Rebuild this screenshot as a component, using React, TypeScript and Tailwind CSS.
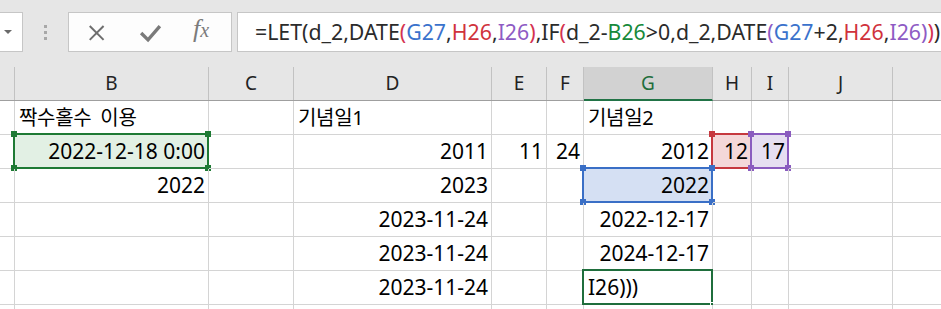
import React from "react";

const COLS = [
  { k: "A", w: 15, label: "" },
  { k: "B", w: 194, label: "B" },
  { k: "C", w: 85, label: "C" },
  { k: "D", w: 198, label: "D" },
  { k: "E", w: 55, label: "E" },
  { k: "F", w: 37, label: "F" },
  { k: "G", w: 129, label: "G" },
  { k: "H", w: 39, label: "H" },
  { k: "I", w: 37, label: "I" },
  { k: "J", w: 104, label: "J" },
  { k: "K", w: 60, label: "" },
];

type Sel = { color: string; fill: string; handles: boolean; fillHandle?: boolean };

type Cell = { t?: string; align?: "l" | "r"; ko?: boolean; sel?: Sel };

const green: Sel = { color: "#1e7a34", fill: "#e2f0e4", handles: true };
const blue: Sel = { color: "#3a6fc6", fill: "#d5e0f3", handles: true };
const red: Sel = { color: "#c6393f", fill: "#f4d8d9", handles: true };
const purple: Sel = { color: "#8a5cbf", fill: "#e6dff1", handles: true };
const active: Sel = { color: "#1f6e3c", fill: "transparent", handles: false, fillHandle: true };

const ROWS: Record<string, Cell>[] = [
  {
    B: { t: "짝수홀수 이용", align: "l", ko: true },
    D: { t: "기념일1", align: "l", ko: true },
    G: { t: "기념일2", align: "l", ko: true },
  },
  {
    B: { t: "2022-12-18 0:00", sel: green },
    D: { t: "2011" },
    E: { t: "11" },
    F: { t: "24" },
    G: { t: "2012" },
    H: { t: "12", sel: red },
    I: { t: "17", sel: purple },
  },
  { B: { t: "2022" }, D: { t: "2023" }, G: { t: "2022", sel: blue } },
  { D: { t: "2023-11-24" }, G: { t: "2022-12-17" } },
  { D: { t: "2023-11-24" }, G: { t: "2024-12-17" } },
  { D: { t: "2023-11-24" }, G: { t: "I26)))", align: "l", sel: active } },
  {},
];

const font = { fontFamily: '"Noto Sans", "Noto Sans CJK KR", sans-serif' };

function Handle({ c, pos }: { c: string; pos: string }) {
  return <div className={`absolute w-[6px] h-[6px] ${pos}`} style={{ background: c }} />;
}

function Overlay({ s }: { s: Sel }) {
  return (
    <div
      className="absolute -left-[2px] -top-[2px] -right-[1px] -bottom-[1px] border-2 pointer-events-none"
      style={{ borderColor: s.color }}
    >
      {s.handles && (
        <>
          <Handle c={s.color} pos="-left-[4px] -top-[4px]" />
          <Handle c={s.color} pos="-right-[4px] -top-[4px]" />
          <Handle c={s.color} pos="-left-[4px] -bottom-[4px]" />
          <Handle c={s.color} pos="-right-[4px] -bottom-[4px]" />
        </>
      )}
      {s.fillHandle && (
        <div className="absolute -right-[3px] -bottom-[3px] w-[4px] h-[4px] bg-[#1f6e3c] border border-white" />
      )}
    </div>
  );
}

const seg = (t: string, c: string) => ({ t, c });
const K = "#2b2b2b";
const BL = "#3a72cc";
const RD = "#d0323c";
const PU = "#8e5bc4";
const GR = "#17893a";
const MG = "#d4324f";
const FORMULA = [
  seg("=LET(d_2,DATE", K),
  seg("(", MG),
  seg("G27", BL),
  seg(",", K),
  seg("H26", RD),
  seg(",", K),
  seg("I26", PU),
  seg(")", MG),
  seg(",IF", K),
  seg("(", MG),
  seg("d_2-", K),
  seg("B26", GR),
  seg(">0,d_2,DATE", K),
  seg("(", PU),
  seg("G27", BL),
  seg("+2,", K),
  seg("H26", RD),
  seg(",", K),
  seg("I26", PU),
  seg(")", PU),
  seg(")", MG),
  seg(")", K),
];

export default function App() {
  return (
    <div className="relative w-[941px] h-[309px] overflow-hidden bg-[#e6e6e6] flex flex-col" style={font}>
      {/* formula bar */}
      <div className="h-[67px] flex items-start pt-[12px] shrink-0">
        <div className="w-[23px] h-[40px] shrink-0 bg-white border border-l-0 border-[#c6c6c6] flex items-center justify-center">
          <div className="w-0 h-0 border-l-[4px] border-r-[4px] border-t-[4px] border-l-transparent border-r-transparent border-t-[#6a6a6a] -ml-[6px]" />
        </div>
        <div className="w-[45px] h-[40px] shrink-0 flex flex-col items-center justify-center gap-[3px]">
          <div className="w-[3px] h-[3px] bg-[#a8a8a8]" />
          <div className="w-[3px] h-[3px] bg-[#a8a8a8]" />
          <div className="w-[3px] h-[3px] bg-[#a8a8a8]" />
        </div>
        <div className="relative w-[164px] h-[40px] shrink-0 bg-[#fdfdfd] border border-[#c6c6c6] flex items-center">
          <svg width="164" height="38" viewBox="0 0 164 38">
            <path d="M21 13 L35 27 M35 13 L21 27" stroke="#6e6e6e" strokeWidth="2" fill="none" />
            <path d="M73 20 L80 27 L92 13" stroke="#7a7a7a" strokeWidth="3.4" fill="none" />
          </svg>
          <div
            className="absolute left-[124px] top-[3px] italic text-[#7b7b7b] leading-none"
            style={{ fontFamily: '"Liberation Serif", serif' }}
          >
            <span className="text-[26px]">f</span>
            <span className="text-[20px]">x</span>
          </div>
        </div>
        <div className="w-[5px] shrink-0" />
        <div className="flex-1 h-[40px] bg-white border border-r-0 border-[#c6c6c6] flex items-center pl-[17px] text-[21.3px] whitespace-nowrap overflow-hidden">
          {FORMULA.map((s, i) => (
            <span key={i} style={{ color: s.c }}>
              {s.t}
            </span>
          ))}
        </div>
      </div>
      {/* column headers */}
      <div className="flex h-[34px] shrink-0 border-b border-[#9f9f9f]">
        {COLS.map((c, i) => (
          <div
            key={c.k}
            className={`shrink-0 flex items-center justify-center text-[19px] ${
              i < COLS.length - 1 ? "border-r border-[#c2c2c2]" : ""
            } ${c.k === "G" ? "bg-[#d2d2d2] text-[#1f6e3c] border-b-2 border-b-[#217346] -mb-px" : "text-[#222]"}`}
            style={{ width: c.w }}
          >
            {c.label}
          </div>
        ))}
      </div>
      {/* rows */}
      <div className="bg-white flex-1">
        {ROWS.map((r, ri) => (
          <div key={ri} className="flex h-[34px]">
            {COLS.map((c) => {
              const cell = r[c.k];
              return (
                <div
                  key={c.k}
                  className="relative shrink-0 border-r border-b border-[#d4d4d4] flex items-center text-black"
                  style={{
                    width: c.w,
                    background: cell?.sel && cell.sel.fill !== "transparent" ? cell.sel.fill : undefined,
                  }}
                >
                  {cell?.t && (
                    <div
                      className={`w-full whitespace-nowrap ${
                        cell.ko ? "text-[20px] [word-spacing:4px] tracking-[-0.3px]" : "text-[21px] pt-[1px]"
                      } ${cell.align === "l" ? "text-left pl-[4px]" : "text-right pr-[3px]"}`}
                    >
                      {cell.t}
                    </div>
                  )}
                  {cell?.sel && <Overlay s={cell.sel} />}
                </div>
              );
            })}
          </div>
        ))}
      </div>
    </div>
  );
}
